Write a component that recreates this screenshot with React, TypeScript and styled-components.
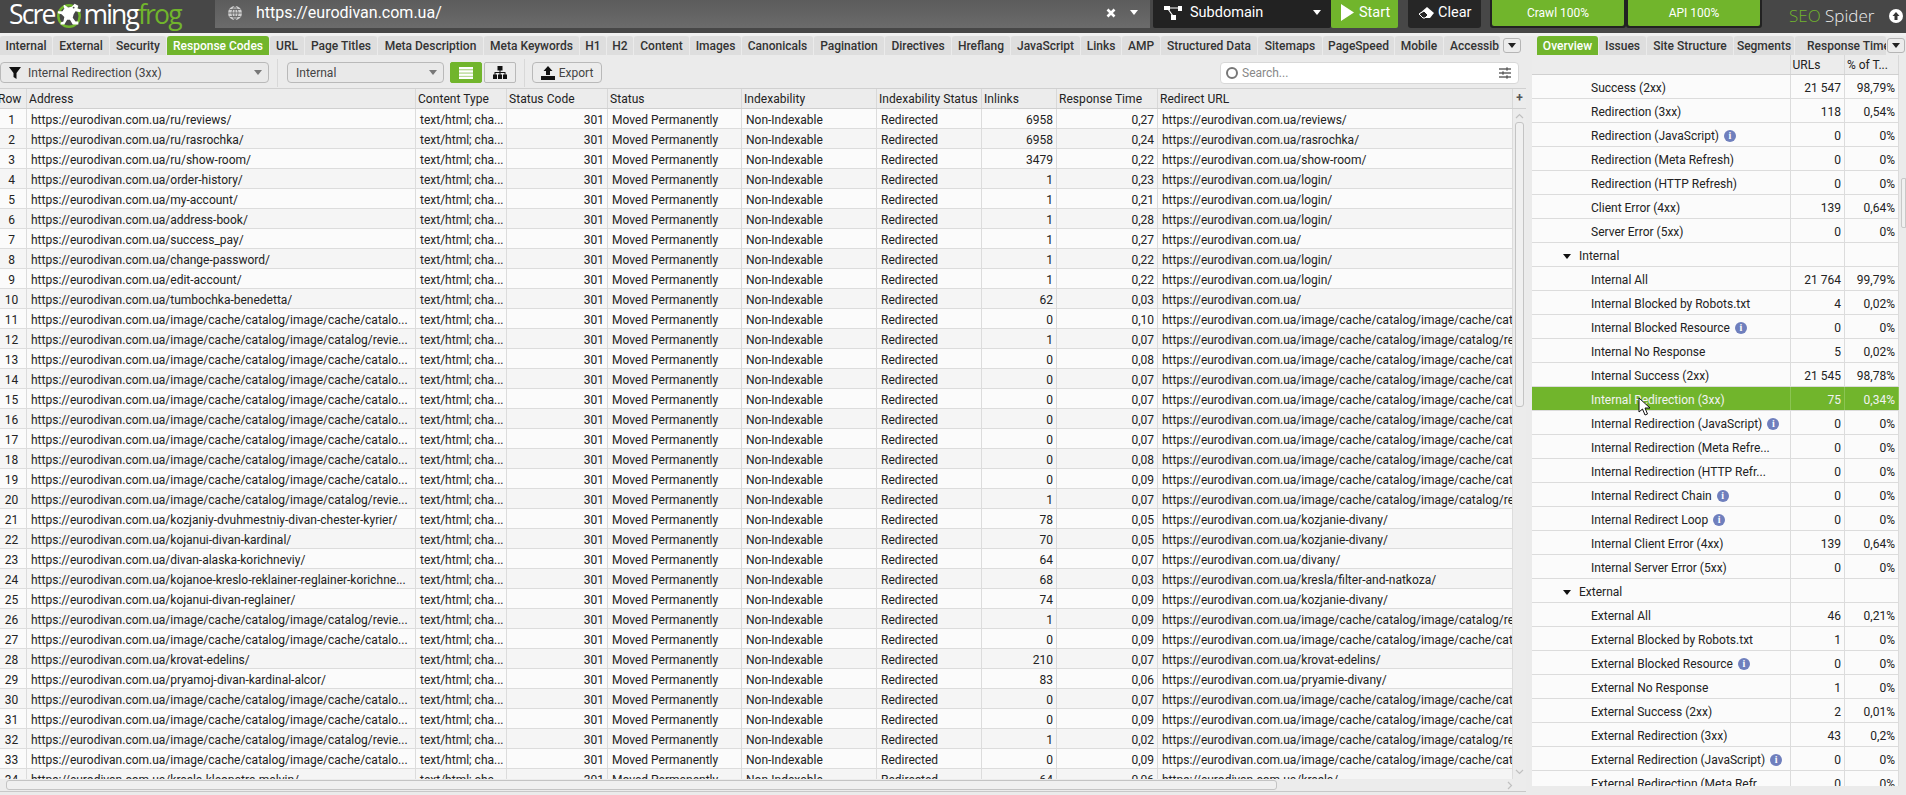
import React from "react";
import styled, { createGlobalStyle } from "styled-components";

const Global = createGlobalStyle`
  html, body { margin: 0; padding: 0; background: #ebebeb; overflow: hidden; }
  * { box-sizing: border-box; }
  #root { font-family: Roboto, "Liberation Sans", sans-serif; font-size: 12px; color: #222; }
`;

const GREEN = "#71b52c";
const COLS = "27px 389px 91px 101px 134px 135px 105px 75px 101px 355px";

const Page = styled.div`
  width: 1906px; height: 795px; display: flex; flex-direction: column; overflow: hidden; position: relative; background: #ebebeb;
`;
const TopBar = styled.header`
  height: 33px; flex: none; background: #474747; display: flex; align-items: flex-start;
`;
const Logo = styled.div`
  width: 215px; height: 33px; flex: none; display: flex; align-items: center; padding: 0 0 4px 9px; line-height: 1;
  font-family: "Open Sans", sans-serif; font-size: 26.5px; font-weight: 400; letter-spacing: -1.85px; color: #fff;
`;
const LogoGreen = styled.span` color: ${GREEN}; `;
const LogoMark = styled.svg` width: 28px; height: 30px; flex: none; margin: 2px 1px 0 0; `;
const UrlField = styled.div`
  width: 935px; height: 28px; flex: none; background: linear-gradient(#5c5c5c, #6b6b6b); display: flex; align-items: center; color: #fff;
  font-size: 16px; padding: 0 0 3px 12px;
`;
const UrlText = styled.span` margin-left: 13px; flex: 1; `;
const UrlIcons = styled.span` display: flex; align-items: center; gap: 14px; padding-right: 12px; `;
const ScopeBox = styled.div`
  width: 178px; height: 28px; margin-left: 3px; flex: none; background: #222; color: #fff; display: flex; align-items: center; font-size: 14.5px;
  padding: 0 10px 3px 11px; border-radius: 0 0 2px 2px;
`;
const ScopeText = styled.span` flex: 1; margin-left: 8px; `;
const StartButton = styled.div`
  width: 67px; height: 28px; flex: none; background: ${GREEN}; color: #fff; display: flex; align-items: center; font-size: 14.5px; gap: 5px; padding: 0 0 3px 10px;
  border-radius: 0 0 2px 2px;
`;
const ClearButton = styled.div`
  width: 73px; height: 28px; margin-left: 10px; flex: none; background: #262626; color: #fff; display: flex; align-items: center; font-size: 14.5px; gap: 4px; padding: 0 0 3px 11px;
  border-radius: 0 0 3px 3px;
`;
const Progress = styled.div<{ $first?: boolean }>`
  width: 136px; height: 28px; margin-left: ${(p) => (p.$first ? "9px" : "0")}; flex: none; background: #222; padding: 0 2px 2px; display: flex;
  border-radius: 0 0 3px 3px;
`;
const ProgressFill = styled.div`
  flex: 1; background: ${GREEN}; color: #fff; display: flex; align-items: center; justify-content: center; font-size: 12px; border-radius: 0 0 2px 2px;
`;
const Brand = styled.div`
  margin-left: 27px; height: 30px; display: flex; align-items: center; font-size: 17px; color: #eee; font-family: "Open Sans", sans-serif; font-weight: 300; white-space: pre;
`;
const BrandGreen = styled.span` color: ${GREEN}; `;
const UpCircle = styled.span`
  position: absolute; top: 9px; left: 1889px; width: 14px; height: 14px; border-radius: 50%; background: #fff; display: flex; align-items: center; justify-content: center;
`;

const Main = styled.div`
  flex: 1; min-height: 0; display: flex; gap: 6px; background: #ebebeb; border-top: 3px solid #f1f1f1;
`;
const LeftPane = styled.section` width: 1526px; flex: none; display: flex; flex-direction: column; min-height: 0; `;
const RightPane = styled.section` flex: 1; display: flex; flex-direction: column; min-height: 0; min-width: 0; `;

const TabStrip = styled.nav`
  height: 19px; flex: none; display: flex; gap: 1px; position: relative; overflow: hidden;
`;
const Tab = styled.div<{ $w: number; $active?: boolean }>`
  width: ${(p) => p.$w}px; flex: none; height: 19px; line-height: 21px; text-align: center; white-space: nowrap; overflow: hidden;
  font-weight: 500; font-size: 12px; border-radius: 3px 3px 0 0;
  background: ${(p) => (p.$active ? GREEN : "#dedede")}; color: ${(p) => (p.$active ? "#fff" : "#333")};
`;
const TabClip = styled(Tab)<{ $pad: number }>` text-align: left; padding-left: ${(p) => p.$pad}px; `;
const TabGap = styled.span` width: 4px; flex: none; `;
const TabMenu = styled.div<{ $r: number }>`
  position: absolute; top: 2px; right: ${(p) => p.$r}px; width: 18px; height: 15px; background: #ececec; border: 1px solid #b5b5b5; border-radius: 3px;
  display: flex; align-items: center; justify-content: center;
`;
const Caret = styled.i<{ $c?: string; $s?: number }>`
  display: block; width: 0; height: 0; flex: none;
  border-left: ${(p) => p.$s ?? 4}px solid transparent; border-right: ${(p) => p.$s ?? 4}px solid transparent;
  border-top: ${(p) => (p.$s ?? 4) + 1}px solid ${(p) => p.$c ?? "#222"};
`;

const Toolbar = styled.div`
  height: 33px; flex: none; display: flex; align-items: center; padding-top: 2px;
`;
const Select = styled.div<{ $w: number; $ml: number }>`
  width: ${(p) => p.$w}px; margin-left: ${(p) => p.$ml}px; height: 21px; flex: none; border: 1px solid #b9b9b9; border-radius: 4px; background: #e9e9e9;
  display: flex; align-items: center; padding: 0 6px 0 8px; color: #444; font-size: 12px;
`;
const FilterIcon = styled.svg` margin-right: 7px; flex: none; `;
const SelectText = styled.span` flex: 1; `;
const Sep = styled.span<{ $ml: number }>` width: 1px; height: 28px; background: #d8d8d8; flex: none; margin-left: ${(p) => p.$ml}px; `;
const ViewBtn = styled.div<{ $on?: boolean; $ml: number }>`
  width: 32px; height: 21px; margin-left: ${(p) => p.$ml}px; flex: none; display: flex; align-items: center; justify-content: center;
  background: ${(p) => (p.$on ? GREEN : "#ececec")}; border: 1px solid ${(p) => (p.$on ? GREEN : "#b9b9b9")}; border-radius: 2px;
`;
const ExportBtn = styled.div`
  width: 70px; height: 21px; margin-left: 7px; flex: none; border: 1px solid #b9b9b9; border-radius: 4px; display: flex; align-items: center; justify-content: center; gap: 4px;
  background: #ececec; color: #444;
`;
const Search = styled.div`
  width: 299px; height: 22px; margin-left: 618px; flex: none; background: #fff; border: 1px solid #d8d8d8; border-radius: 4px; display: flex; align-items: center; color: #888;
  padding: 0 6px 0 5px; gap: 4px;
`;
const SearchCircle = styled.i` width: 12px; height: 12px; border: 2px solid #777; border-radius: 50%; display: block; flex: none; `;
const SearchText = styled.span` flex: 1; `;

const TableWrap = styled.div` flex: 1; min-height: 0; display: flex; flex-direction: column; border-top: 1px solid #d0d0d0; overflow: hidden; margin-bottom: 3px; `;
const TableArea = styled.div` flex: 1; min-height: 0; display: flex; overflow: hidden; `;
const Rows = styled.div` width: 1513px; flex: none; overflow: hidden; `;
const HeadRow = styled.div`
  display: grid; grid-template-columns: ${COLS}; height: 20px; background: #ececec; border-bottom: 1px solid #d0d0d0;
`;
const HeadCell = styled.div<{ $first?: boolean }>`
  border-right: 1px solid #d8d8d8; line-height: 17px; padding: 2px 0 0 ${(p) => (p.$first ? "0" : "2px")}; text-indent: ${(p) => (p.$first ? "-2px" : "0")};
  white-space: nowrap; overflow: hidden; color: #222; letter-spacing: 0.05px;
`;
const Row = styled.div<{ $even: boolean }>`
  display: grid; grid-template-columns: ${COLS}; height: 20px; background: ${(p) => (p.$even ? "#f5f5f5" : "#fbfbfb")}; border-bottom: 1px solid #dcdcdc;
`;
const Cell = styled.div<{ $right?: boolean; $center?: boolean }>`
  border-right: 1px solid #dcdcdc; line-height: 17px; white-space: nowrap; overflow: hidden; color: #222;
  padding: ${(p) => (p.$right ? "3px 3px 0 0" : p.$center ? "3px 3px 0 0" : "3px 0 0 4px")}; text-align: ${(p) => (p.$right ? "right" : p.$center ? "center" : "left")};
`;
const VScroll = styled.div`
  flex: 1; background: #ececec; display: flex; flex-direction: column; align-items: center;
`;
const PlusCell = styled.div` height: 20px; width: 100%; flex: none; text-align: center; font-weight: 700; line-height: 18px; color: #555; border-bottom: 1px solid #d0d0d0; `;
const ArrowSlot = styled.svg<{ $bottom?: boolean }>` width: 9px; height: 6px; flex: none; margin: ${(p) => (p.$bottom ? "auto 0 4px" : "4px 0 3px")}; `;
const VThumb = styled.div<{ $h: number }>` width: 9px; height: ${(p) => p.$h}px; flex: none; border: 1px solid #c4c4c4; border-radius: 3px; background: #f0f0f0; `;
const HScroll = styled.div`
  height: 13px; flex: none; background: #ececec; border-bottom: 1px solid #c8c8c8; padding: 1px 13px 0 6px; display: flex; align-items: flex-start; justify-content: space-between;
`;
const HThumb = styled.div` width: 1271px; height: 10px; background: #f0f0f0; border: 1px solid #c4c4c4; border-radius: 3px; `;
const HArrow = styled.svg` width: 6px; height: 9px; margin-top: 1px; flex: none; `;

const OverHead = styled.div`
  display: grid; grid-template-columns: 258.5px 54.5px 54px; height: 20px; flex: none; background: #ececec; border-bottom: 1px solid #d0d0d0; width: 367px;
`;
const OverHeadCell = styled.div` border-right: 1px solid #d8d8d8; padding: 2px 0 0 2px; line-height: 17px; white-space: nowrap; overflow: hidden; `;
const OverBody = styled.div` height: 711px; flex: none; display: flex; overflow: hidden; `;
const OverRows = styled.div` width: 367px; flex: none; overflow: hidden; `;
const OverRow = styled.div<{ $sel?: boolean }>`
  display: grid; grid-template-columns: 258.5px 54.5px 54px; height: 24px; background: ${(p) => (p.$sel ? GREEN : "#fbfbfb")}; border-bottom: 1px solid #dcdcdc;
  color: ${(p) => (p.$sel ? "#f2f2f2" : "#222")};
`;
const OverCell = styled.div<{ $sel?: boolean; $right?: boolean; $indent?: number }>`
  border-right: 1px solid ${(p) => (p.$sel ? "#8bc453" : "#dcdcdc")}; line-height: 17px; white-space: nowrap; overflow: hidden; display: flex; align-items: center;
  justify-content: ${(p) => (p.$right ? "flex-end" : "flex-start")}; padding: ${(p) => (p.$right ? "3px 3px 0 0" : `3px 0 0 ${p.$indent ?? 59}px`)};
`;
const Info = styled.span`
  width: 12px; height: 12px; border-radius: 50%; background: #6f7fbd; color: #fff; font: 700 10px/12px "Liberation Serif", serif; text-align: center; margin-left: 5px; flex: none; display: block;
`;
const Tri = styled.span` margin: 0 8px 0 0; display: block; `;
const SideScroll = styled.div` flex: 1; display: flex; flex-direction: column; align-items: center; `;
const SideThumb = styled.div` width: 5px; height: 50px; margin-top: 103px; background: #f0f0f0; border: 1px solid #c8c8c8; border-radius: 2px 0 0 2px; margin-left: 2px; `;
const Cursor = styled.svg` position: absolute; left: 1638px; top: 397px; width: 13px; height: 19px; `;

const Internal = "https://eurodivan.com.ua/";
const CA = Internal + "image/cache/catalog/image/cache/catalo...";
const RE = Internal + "image/cache/catalog/image/catalog/revie...";
const CU = Internal + "image/cache/catalog/image/cache/catalog/image/cache/catalog/product";
const RU = Internal + "image/cache/catalog/image/catalog/reviews/image/cache/catalog/product";

const data: [string, string, string, string][] = [
  [Internal + "ru/reviews/", "6958", "0,27", Internal + "reviews/"],
  [Internal + "ru/rasrochka/", "6958", "0,24", Internal + "rasrochka/"],
  [Internal + "ru/show-room/", "3479", "0,22", Internal + "show-room/"],
  [Internal + "order-history/", "1", "0,23", Internal + "login/"],
  [Internal + "my-account/", "1", "0,21", Internal + "login/"],
  [Internal + "address-book/", "1", "0,28", Internal + "login/"],
  [Internal + "success_pay/", "1", "0,27", Internal],
  [Internal + "change-password/", "1", "0,22", Internal + "login/"],
  [Internal + "edit-account/", "1", "0,22", Internal + "login/"],
  [Internal + "tumbochka-benedetta/", "62", "0,03", Internal],
  [CA, "0", "0,10", CU],
  [RE, "1", "0,07", RU],
  [CA, "0", "0,08", CU],
  [CA, "0", "0,07", CU],
  [CA, "0", "0,07", CU],
  [CA, "0", "0,07", CU],
  [CA, "0", "0,07", CU],
  [CA, "0", "0,08", CU],
  [CA, "0", "0,09", CU],
  [RE, "1", "0,07", RU],
  [Internal + "kozjaniy-dvuhmestniy-divan-chester-kyrier/", "78", "0,05", Internal + "kozjanie-divany/"],
  [Internal + "kojanui-divan-kardinal/", "70", "0,05", Internal + "kozjanie-divany/"],
  [Internal + "divan-alaska-korichneviy/", "64", "0,07", Internal + "divany/"],
  [Internal + "kojanoe-kreslo-reklainer-reglainer-korichne...", "68", "0,03", Internal + "kresla/filter-and-natkoza/"],
  [Internal + "kojanui-divan-reglainer/", "74", "0,09", Internal + "kozjanie-divany/"],
  [RE, "1", "0,09", RU],
  [CA, "0", "0,09", CU],
  [Internal + "krovat-edelins/", "210", "0,07", Internal + "krovat-edelins/"],
  [Internal + "pryamoj-divan-kardinal-alcor/", "83", "0,06", Internal + "pryamie-divany/"],
  [CA, "0", "0,07", CU],
  [CA, "0", "0,09", CU],
  [RE, "1", "0,02", RU],
  [CA, "0", "0,09", CU],
  [Internal + "kresla-kleopatra-malvin/", "64", "0,06", Internal + "kresla/"],
];

const leftTabs: [string, number][] = [
  ["Internal", 52], ["External", 56], ["Security", 56], ["Response Codes", 102], ["URL", 34], ["Page Titles", 72], ["Meta Description", 105],
  ["Meta Keywords", 95], ["H1", 26], ["H2", 26], ["Content", 55], ["Images", 51], ["Canonicals", 71], ["Pagination", 70], ["Directives", 66],
  ["Hreflang", 58], ["JavaScript", 69], ["Links", 40], ["AMP", 38], ["Structured Data", 96], ["Sitemaps", 64], ["PageSpeed", 71], ["Mobile", 48],
];
const rightTabs: [string, number][] = [["Overview", 61], ["Issues", 47], ["Site Structure", 86], ["Segments", 60]];

const headers = ["Row", "Address", "Content Type", "Status Code", "Status", "Indexability", "Indexability Status", "Inlinks", "Response Time", "Redirect URL"];

type Over = { t: string; u?: string; p?: string; info?: boolean; group?: boolean; sel?: boolean };
const over: Over[] = [
  { t: "Success (2xx)", u: "21 547", p: "98,79%" },
  { t: "Redirection (3xx)", u: "118", p: "0,54%" },
  { t: "Redirection (JavaScript)", u: "0", p: "0%", info: true },
  { t: "Redirection (Meta Refresh)", u: "0", p: "0%" },
  { t: "Redirection (HTTP Refresh)", u: "0", p: "0%" },
  { t: "Client Error (4xx)", u: "139", p: "0,64%" },
  { t: "Server Error (5xx)", u: "0", p: "0%" },
  { t: "Internal", group: true },
  { t: "Internal All", u: "21 764", p: "99,79%" },
  { t: "Internal Blocked by Robots.txt", u: "4", p: "0,02%" },
  { t: "Internal Blocked Resource", u: "0", p: "0%", info: true },
  { t: "Internal No Response", u: "5", p: "0,02%" },
  { t: "Internal Success (2xx)", u: "21 545", p: "98,78%" },
  { t: "Internal Redirection (3xx)", u: "75", p: "0,34%", sel: true },
  { t: "Internal Redirection (JavaScript)", u: "0", p: "0%", info: true },
  { t: "Internal Redirection (Meta Refre...", u: "0", p: "0%" },
  { t: "Internal Redirection (HTTP Refr...", u: "0", p: "0%" },
  { t: "Internal Redirect Chain", u: "0", p: "0%", info: true },
  { t: "Internal Redirect Loop", u: "0", p: "0%", info: true },
  { t: "Internal Client Error (4xx)", u: "139", p: "0,64%" },
  { t: "Internal Server Error (5xx)", u: "0", p: "0%" },
  { t: "External", group: true },
  { t: "External All", u: "46", p: "0,21%" },
  { t: "External Blocked by Robots.txt", u: "1", p: "0%" },
  { t: "External Blocked Resource", u: "0", p: "0%", info: true },
  { t: "External No Response", u: "1", p: "0%" },
  { t: "External Success (2xx)", u: "2", p: "0,01%" },
  { t: "External Redirection (3xx)", u: "43", p: "0,2%" },
  { t: "External Redirection (JavaScript)", u: "0", p: "0%", info: true },
  { t: "External Redirection (Meta Refr...", u: "0", p: "0%" },
];

function FrogMark() {
  return (
    <LogoMark viewBox="0 0 30 30">
      <circle cx="15" cy="15" r="11.500" fill="none" stroke={GREEN} strokeWidth="2.600" />
      <path
        fill="#fff"
        d="M10 3l4 3 4-1 3-3 4 2-1 3 4 1-1 3-5-1-2 3-1 4 3 4 3 0 0 3-6 0-3-5-3 0-3 5-4 0 0-2 3-1 1-5-3-3-4-1 0-2 5 0 2-3-1-3z"
      />
      <circle cx="20" cy="6" r="1" fill="#474747" />
    </LogoMark>
  );
}

export default function App() {
  return (
    <Page>
      <Global />
      <TopBar>
        <Logo>
          Scre
          <FrogMark />
          ming<LogoGreen>frog</LogoGreen>
        </Logo>
        <UrlField>
          <svg width="16" height="16" viewBox="0 0 16 16" fill="none">
            <circle cx="8" cy="8" r="7" fill="#cfcfcf" />
            <path d="M1 8h14M8 1v14M2.500 4.500h11M2.500 11.500h11M8 1c-4 4-4 10 0 14M8 1c4 4 4 10 0 14" stroke="#666" strokeWidth="0.900" />
          </svg>
          <UrlText>https://eurodivan.com.ua/</UrlText>
          <UrlIcons>
            <svg width="10" height="10" viewBox="0 0 10 10"><path d="M1.500 1.500l7 7M8.500 1.500l-7 7" stroke="#fff" strokeWidth="2.600" /></svg>
            <Caret $c="#fff" $s={4} />
          </UrlIcons>
        </UrlField>
        <ScopeBox>
          <svg width="18" height="14" viewBox="0 0 18 14">
            <rect x="0" y="0" width="6" height="4" fill="#fff" />
            <rect x="14" y="0" width="4" height="5" fill="#fff" />
            <rect x="7" y="9" width="5" height="5" fill="#fff" />
            <path d="M5 2h10M4 3l5 7" stroke="#fff" strokeWidth="1.200" fill="none" />
          </svg>
          <ScopeText>Subdomain</ScopeText>
          <Caret $c="#fff" $s={4} />
        </ScopeBox>
        <StartButton>
          <svg width="13" height="17" viewBox="0 0 13 17"><path d="M0 0l13 8.500L0 17z" fill="#fff" /></svg>
          Start
        </StartButton>
        <ClearButton>
          <svg width="15" height="12" viewBox="0 0 15 12"><path d="M8 0l7 6-4 5H5L0 7z" fill="#fff" /><path d="M0 7l5-3 4 4-3 3H4z" fill="#262626" stroke="#fff" strokeWidth="1" /></svg>
          Clear
        </ClearButton>
        <Progress $first><ProgressFill>Crawl 100%</ProgressFill></Progress>
        <Progress><ProgressFill>API 100%</ProgressFill></Progress>
        <Brand><BrandGreen>SEO</BrandGreen> Spider</Brand>
        <UpCircle>
          <svg width="10" height="10" viewBox="0 0 10 10"><path d="M5 1L1.500 5H3.500V9H6.500V5H8.500z" fill="#333" /></svg>
        </UpCircle>
      </TopBar>
      <Main>
        <LeftPane>
          <TabStrip>
            {leftTabs.map(([t, w]) => (
              <Tab key={t} $w={w} $active={t === "Response Codes"}>{t}</Tab>
            ))}
            <TabClip $w={56} $pad={6}>Accessib</TabClip>
            <TabMenu $r={5}><Caret $s={4} /></TabMenu>
          </TabStrip>
          <Toolbar>
            <Select $w={269} $ml={0}>
              <FilterIcon width="12" height="12" viewBox="0 0 12 12"><path d="M0 0h12L7.500 6v6L4.500 10V6z" fill="#111" /></FilterIcon>
              <SelectText>Internal Redirection (3xx)</SelectText>
              <Caret $c="#777" />
            </Select>
            <Sep $ml={8} />
            <Select $w={157} $ml={9}>
              <SelectText>Internal</SelectText>
              <Caret $c="#777" />
            </Select>
            <ViewBtn $on $ml={6}>
              <svg width="14" height="12" viewBox="0 0 14 12" fill="#fff"><rect width="14" height="2.500" /><rect y="3.200" width="14" height="2.500" /><rect y="6.400" width="14" height="2.500" /><rect y="9.500" width="14" height="2.500" /></svg>
            </ViewBtn>
            <ViewBtn $ml={2}>
              <svg width="14" height="13" viewBox="0 0 14 13" fill="#111"><rect x="4.500" width="5" height="4.500" /><rect y="8.500" width="4" height="4.500" /><rect x="5" y="8.500" width="4" height="4.500" /><rect x="10" y="8.500" width="4" height="4.500" /><path d="M6.500 4h1v2H12.500v3h-1V7h-4v2h-1V7h-4v2h-1V6h5z" /></svg>
            </ViewBtn>
            <Sep $ml={8} />
            <ExportBtn>
              <svg width="14" height="14" viewBox="0 0 14 14"><path d="M7 0L2.500 5H5v4h4V5h2.500z" fill="#111" /><path d="M0 10h14v4H0z" fill="#111" /></svg>
              Export
            </ExportBtn>
            <Search>
              <SearchCircle />
              <SearchText>Search...</SearchText>
              <svg width="14" height="12" viewBox="0 0 14 12" stroke="#666" strokeWidth="1.400"><path d="M1 2h12M1 6h12M1 10h12" /><path d="M9 .5v3M5 4.500v3M9 8.500v3" strokeWidth="2" /></svg>
            </Search>
          </Toolbar>
          <TableWrap>
            <TableArea>
              <Rows>
                <HeadRow>
                  {headers.map((h, i) => <HeadCell key={h} $first={i === 0}>{h}</HeadCell>)}
                </HeadRow>
                {data.map((d, i) => (
                  <Row key={i} $even={i % 2 === 1}>
                    <Cell $center>{i + 1}</Cell>
                    <Cell>{d[0]}</Cell>
                    <Cell>text/html; cha...</Cell>
                    <Cell $right>301</Cell>
                    <Cell>Moved Permanently</Cell>
                    <Cell>Non-Indexable</Cell>
                    <Cell>Redirected</Cell>
                    <Cell $right>{d[1]}</Cell>
                    <Cell $right>{d[2]}</Cell>
                    <Cell>{d[3]}</Cell>
                  </Row>
                ))}
              </Rows>
              <VScroll>
                <PlusCell>+</PlusCell>
                <ArrowSlot viewBox="0 0 9 6"><path d="M1 5l3.500-3.500L8 5" fill="none" stroke="#c0c0c0" strokeWidth="1.200" /></ArrowSlot>
                <VThumb $h={285} />
                <ArrowSlot $bottom viewBox="0 0 9 6"><path d="M1 1l3.500 3.500L8 1" fill="none" stroke="#c0c0c0" strokeWidth="1.200" /></ArrowSlot>
              </VScroll>
            </TableArea>
            <HScroll>
              <HThumb />
              <HArrow viewBox="0 0 6 9"><path d="M1 1l3.500 3.500L1 8" fill="none" stroke="#c0c0c0" strokeWidth="1.200" /></HArrow>
            </HScroll>
          </TableWrap>
        </LeftPane>
        <RightPane>
          <TabStrip>
            <TabGap />
            {rightTabs.map(([t, w]) => (
              <Tab key={t} $w={w} $active={t === "Overview"}>{t}</Tab>
            ))}
            <TabClip $w={91} $pad={12}>Response Time</TabClip>
            <TabMenu $r={1}><Caret $s={4} /></TabMenu>
          </TabStrip>
          <OverHead>
            <OverHeadCell />
            <OverHeadCell>URLs</OverHeadCell>
            <OverHeadCell>% of T...</OverHeadCell>
          </OverHead>
          <OverBody>
            <OverRows>
              {over.map((r) => (
                <OverRow key={r.t} $sel={r.sel}>
                  <OverCell $sel={r.sel} $indent={r.group ? 31 : 59}>
                    {r.group && <Tri><Caret $s={4} $c="#111" /></Tri>}
                    {r.t}
                    {r.info && <Info>i</Info>}
                  </OverCell>
                  <OverCell $sel={r.sel} $right>{r.u}</OverCell>
                  <OverCell $sel={r.sel} $right>{r.p}</OverCell>
                </OverRow>
              ))}
            </OverRows>
            <SideScroll>
              <SideThumb />
            </SideScroll>
          </OverBody>
        </RightPane>
      </Main>
      <Cursor viewBox="0 0 13 19">
        <path d="M1 1v14l3.500-3 2.500 6 2.500-1-2.500-6h5z" fill="#fff" stroke="#111" strokeWidth="1" />
      </Cursor>
    </Page>
  );
}
